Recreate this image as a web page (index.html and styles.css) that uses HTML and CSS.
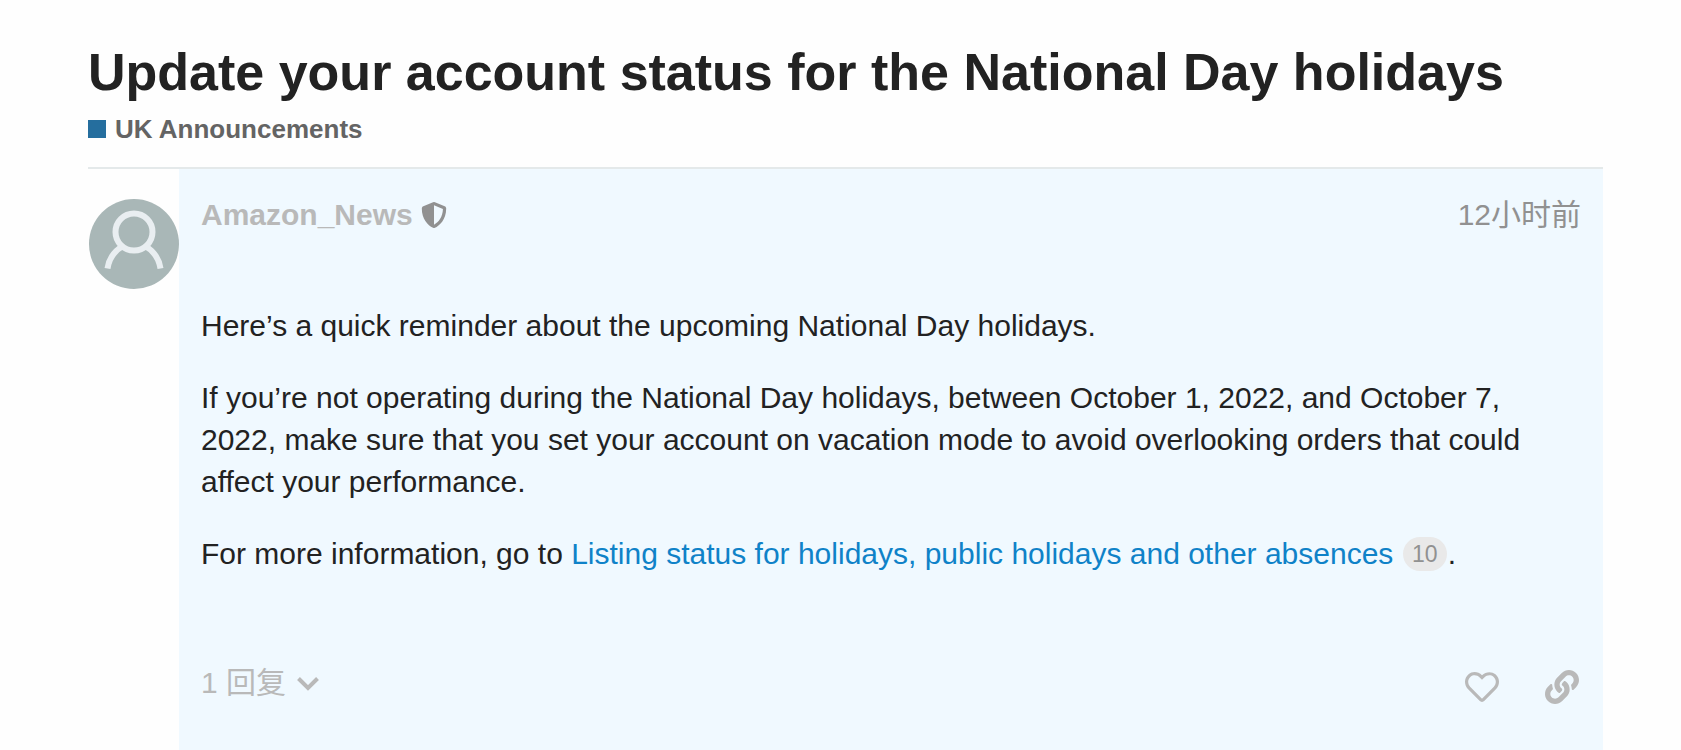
FILE: index.html
```
<!DOCTYPE html>
<html lang="en">
<head>
<meta charset="UTF-8">
<meta name="viewport" content="width=device-width, initial-scale=1.0">
<title>Update your account status for the National Day holidays</title>
<link rel="stylesheet" href="styles.css">
</head>
<body>

<main class="topic">
    <header class="topic-title">
        <h1>Update your account status for the National Day holidays</h1>
        <a class="category" href="#"><span class="category-badge"></span>UK Announcements</a>
    </header>

    <article class="post">
        <a class="avatar" href="#" aria-label="Amazon_News">
            <svg viewBox="0 0 90 90" width="90" height="90">
                <circle cx="45" cy="45" r="45" fill="#a9b7b7"/>
                <g fill="none" stroke="#e9eef1" stroke-width="6">
                    <circle cx="45" cy="33" r="18.500"/>
                    <path d="M18.500 69.500C20 60 25 52 34 47M71.500 69.500C70 60 65 52 56 47"/>
                </g>
            </svg>
        </a>

        <div class="post-body">
            <div class="post-meta">
                <a class="username" href="#">Amazon_News</a>
                <svg class="shield" viewBox="0 0 512 512" width="26" height="26"><path d="M466.500 83.700l-192-80a48.150 48.150 0 0 0-36.900 0l-192 80C27.700 91.100 16 108.600 16 128c0 198.500 114.500 335.700 221.500 380.300 11.800 4.900 25.100 4.900 36.900 0C360.100 472.600 496 349.300 496 128c0-19.400-11.700-36.900-29.500-44.300zM256.100 446.300l-.1-381 175.900 73.300c-3.300 151.400-82.100 261.100-175.800 307.700z"/></svg>
                <a class="post-date" href="#">12小时前</a>
            </div>

            <div class="cooked">
                <p>Here’s a quick reminder about the upcoming National Day holidays.</p>
                <p>If you’re not operating during the National Day holidays, between October 1, 2022, and October 7, 2022, make sure that you set your account on vacation mode to avoid overlooking orders that could affect your performance.</p>
                <p>For more information, go to <a href="#">Listing status for holidays, public holidays and other absences</a> <span class="clicks">10</span>.</p>
            </div>

            <div class="post-controls">
                <button type="button" class="replies">
                    1 回复
                    <svg viewBox="0 0 24 16" width="24" height="16"><path d="M2.500 3.500l9.500 9.500 9.500-9.500" fill="none" stroke="currentColor" stroke-width="4"/></svg>
                </button>
                <div class="actions">
                    <button type="button" aria-label="Like">
                        <svg viewBox="0 0 512 512" width="34" height="34"><path d="M458.400 64.300C400.600 15.700 311.300 23 256 79.300 200.700 23 111.400 15.600 53.600 64.300-21.600 127.600-10.600 230.800 43 285.500l175.400 178.700c10 10.200 23.400 15.900 37.600 15.900 14.300 0 27.600-5.600 37.600-15.800L469 285.600c53.500-54.700 64.700-157.900-10.600-221.300zm-23.600 187.500L259.400 430.500c-2.400 2.400-4.400 2.400-6.800 0L77.200 251.800c-36.500-37.200-43.900-107.600 7.300-150.700 38.900-32.700 98.900-27.800 136.500 10.500l35 35.700 35-35.700c37.800-38.500 97.800-43.200 136.500-10.600 51.100 43.100 43.500 113.900 7.300 150.800z"/></svg>
                    </button>
                    <button type="button" aria-label="Copy link">
                        <svg viewBox="0 0 512 512" width="34" height="34"><path d="M326.612 185.391c59.747 59.809 58.927 155.698.36 214.590-.11.12-.24.25-.36.37l-67.200 67.200c-59.270 59.270-155.699 59.262-214.960 0-59.270-59.260-59.270-155.700 0-214.960l37.106-37.106c9.840-9.840 26.786-3.300 27.294 10.606.648 17.722 3.826 35.527 9.690 52.721 1.986 5.822.567 12.262-3.783 16.612l-13.087 13.087c-28.026 28.026-28.905 73.660-1.155 101.960 28.024 28.579 74.086 28.749 102.325.51l67.200-67.190c28.191-28.191 28.073-73.757 0-101.830-3.701-3.694-7.429-6.564-10.341-8.569a16.037 16.037 0 0 1-6.947-12.606c-.396-10.567 3.348-21.456 11.698-29.806l21.054-21.055c5.521-5.521 14.182-6.199 20.584-1.731a152.482 152.482 0 0 1 20.522 17.197zM467.547 44.449c-59.261-59.262-155.690-59.270-214.960 0l-67.200 67.200c-.12.12-.25.25-.36.37-58.566 58.892-59.387 154.781.36 214.590a152.454 152.454 0 0 0 20.521 17.196c6.402 4.468 15.064 3.789 20.584-1.731l21.054-21.055c8.350-8.350 12.094-19.239 11.698-29.806a16.037 16.037 0 0 0-6.947-12.606c-2.912-2.005-6.640-4.875-10.341-8.569-28.073-28.073-28.191-73.639 0-101.830l67.200-67.190c28.239-28.239 74.300-28.069 102.325.51 27.750 28.300 26.872 73.934-1.155 101.960l-13.087 13.087c-4.350 4.350-5.769 10.790-3.783 16.612 5.864 17.194 9.042 34.999 9.690 52.721.509 13.906 17.454 20.446 27.294 10.606l37.106-37.106c59.271-59.259 59.271-155.699.001-214.959z"/></svg>
                    </button>
                </div>
            </div>
        </div>
    </article>
</main>

</body>
</html>
```
FILE: styles.css
```
* {
    box-sizing: border-box;
}
body {
    margin: 0;
    background: #fefefe;
    color: #222;
    font-family: "Liberation Sans", Arial, "Noto Sans CJK SC", sans-serif;
    font-size: 30px;
    line-height: 42px;
}
a {
    color: #0f82c8;
    text-decoration: none;
}
svg {
    display: block;
    fill: currentColor;
}
button {
    padding: 0;
    border: none;
    background: none;
    color: #b9b9b9;
    font: inherit;
    cursor: pointer;
}

.topic {
    display: flex;
    flex-direction: column;
    min-height: 100vh;
    padding: 40px 78px 0 88px;
}

/* Title and category */
.topic-title {
    padding-bottom: 17px;
    border-bottom: 2px solid #e4e9ea;
}
.topic-title h1 {
    margin: 0;
    font-size: 52px;
    line-height: 64px;
}
.category {
    display: flex;
    align-items: center;
    gap: 9px;
    margin-top: 4px;
    color: #646464;
    font-size: 26px;
    font-weight: bold;
}
.category-badge {
    width: 18px;
    height: 18px;
    background: #256e9e;
}

/* Post */
.post {
    display: flex;
    flex: 1;
}
.avatar {
    flex: none;
    margin: 30px 0 0 1px;
}
.post-body {
    flex: 1;
    padding: 25px 22px 36px;
    background: #f0f9ff;
}
.post-meta {
    display: flex;
    align-items: center;
    gap: 8px;
}
.username {
    color: #b9b9b9;
    font-weight: bold;
}
.shield {
    color: #919191;
}
.post-date {
    margin-left: auto;
    color: #919191;
}
.cooked {
    padding: 69px 24px 0 0;
}
.cooked p {
    margin: 0 0 30px;
}
.clicks {
    display: inline-block;
    min-width: 44px;
    margin: 0 1px;
    padding: 0 9px;
    border-radius: 17px;
    background: #e9e9e9;
    color: #919191;
    font-size: 23px;
    line-height: 34px;
    text-align: center;
    vertical-align: 2px;
}

/* Reply count and post actions */
.post-controls {
    display: flex;
    justify-content: space-between;
    align-items: flex-end;
    margin-top: 87px;
}
.replies {
    display: flex;
    align-items: center;
    gap: 10px;
}
.actions {
    display: flex;
    gap: 46px;
    padding-right: 2px;
}
```
